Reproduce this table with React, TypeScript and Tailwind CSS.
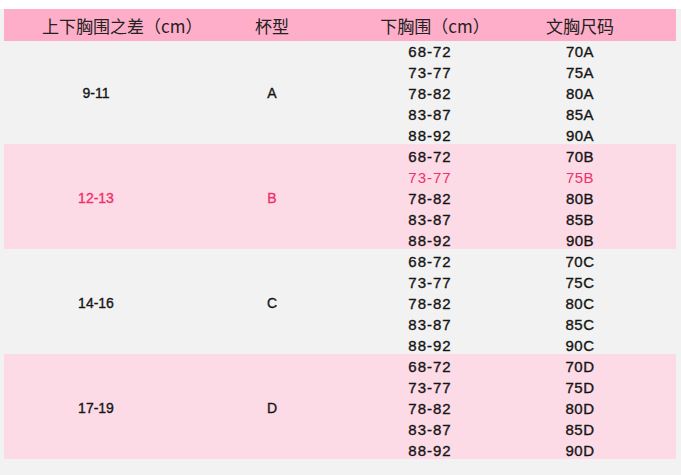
import React from "react";

type Group = { diff: string; cup: string; bg: string };
const groups: Group[] = [
  { diff: "9-11", cup: "A", bg: "bg-[#f2f2f2]" },
  { diff: "12-13", cup: "B", bg: "bg-[#fcdae6]" },
  { diff: "14-16", cup: "C", bg: "bg-[#f2f2f2]" },
  { diff: "17-19", cup: "D", bg: "bg-[#fcdae6]" },
];
const bands = ["68-72", "73-77", "78-82", "83-87", "88-92"];
const sizes = ["70", "75", "80", "85", "90"];

export default function App() {
  return (
    <div
      className="w-[681px] h-[475px] bg-[#f2f2f2] overflow-hidden"
      style={{ fontFamily: '"Liberation Sans", Arial, "Noto Sans CJK SC", sans-serif' }}
    >
      <div className="h-[9px] bg-white" />
      <div className="pl-[4px] w-[676px]">
        <div
          className="flex h-[32px] items-center bg-[#ffaec9] text-[17px] text-[#222]"
          style={{ fontFamily: '"Noto Sans CJK SC", "Liberation Sans", sans-serif' }}
        >
          <div className="w-[184px] pl-[38px] text-center leading-none whitespace-nowrap">上下胸围之差（cm）</div>
          <div className="w-[168px] text-center leading-none">杯型</div>
          <div className="w-[148px] pl-[10px] text-center leading-none whitespace-nowrap">下胸围（cm）</div>
          <div className="w-[152px] text-center leading-none">文胸尺码</div>
        </div>
        {groups.map((g, gi) => {
          const pinkText = gi === 1;
          const first = gi === 0;
          return (
            <div
              key={g.cup}
              className={`flex ${first ? "h-[103px]" : "h-[105px] pt-[2px]"} ${g.bg} text-[#151515] [-webkit-text-stroke:0.35px]`}
            >
              <div className={`w-[184px] flex items-center justify-center text-[14px] leading-none ${pinkText ? "text-[#f0306a]" : ""}`}>
                {g.diff}
              </div>
              <div className={`w-[168px] flex items-center justify-center text-[14px] leading-none ${pinkText ? "text-[#f0306a]" : ""}`}>
                {g.cup}
              </div>
              <div className="w-[148px] flex flex-col text-[15px] leading-none tracking-[1px]">
                {bands.map((b, i) => (
                  <div
                    key={b}
                    className={`h-[21px] shrink-0 flex items-center justify-center ${pinkText && i === 1 ? "text-[#f0306a] [-webkit-text-stroke:0px]" : ""}`}
                  >
                    {b}
                  </div>
                ))}
              </div>
              <div className="w-[152px] flex flex-col text-[15px] leading-none tracking-[0.5px]">
                {sizes.map((s, i) => (
                  <div
                    key={s}
                    className={`h-[21px] shrink-0 flex items-center justify-center ${pinkText && i === 1 ? "text-[#f0306a] [-webkit-text-stroke:0px]" : ""}`}
                  >
                    {s}
                    {g.cup}
                  </div>
                ))}
              </div>
            </div>
          );
        })}
      </div>
    </div>
  );
}
